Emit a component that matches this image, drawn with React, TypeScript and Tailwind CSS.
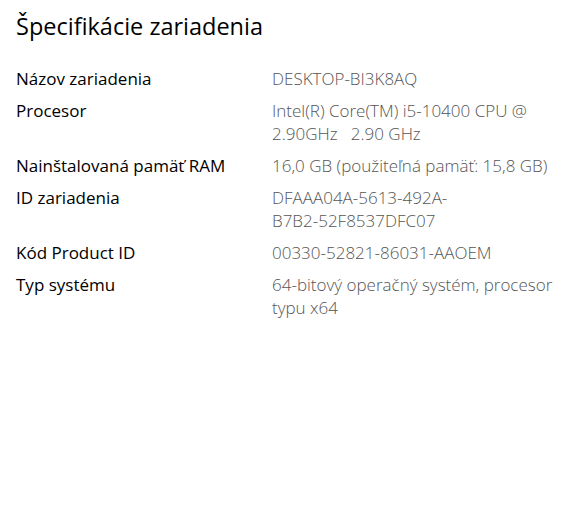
export default function App() {
  const rows: { label: string; value: string[] }[] = [
    { label: 'Názov zariadenia', value: ['DESKTOP-BI3K8AQ'] },
    { label: 'Procesor', value: ['Intel(R) Core(TM) i5-10400 CPU @', '2.90GHz   2.90 GHz'] },
    { label: 'Nainštalovaná pamäť RAM', value: ['16,0 GB (použiteľná pamäť: 15,8 GB)'] },
    { label: 'ID zariadenia', value: ['DFAAA04A-5613-492A-', 'B7B2-52F8537DFC07'] },
    { label: 'Kód Product ID', value: ['00330-52821-86031-AAOEM'] },
    { label: 'Typ systému', value: ['64-bitový operačný systém, procesor', 'typu x64'] },
  ];

  return (
    <div className="h-[532px] w-[569px] bg-white px-4 pt-[9px] font-['Open_Sans',sans-serif]">
      <h1 className="text-[23.5px] leading-[34px] font-normal text-black">Špecifikácie zariadenia</h1>
      <div className="mt-6 flex flex-col gap-[9px]">
        {rows.map((row) => (
          <div key={row.label} className="grid grid-cols-[256px_1fr] text-[17px] leading-[23px]">
            <div className="text-black">{row.label}</div>
            <div className="font-light text-[#555555]">
              {row.value.map((line) => (
                <div key={line} className="whitespace-pre">{line}</div>
              ))}
            </div>
          </div>
        ))}
      </div>
    </div>
  );
}
